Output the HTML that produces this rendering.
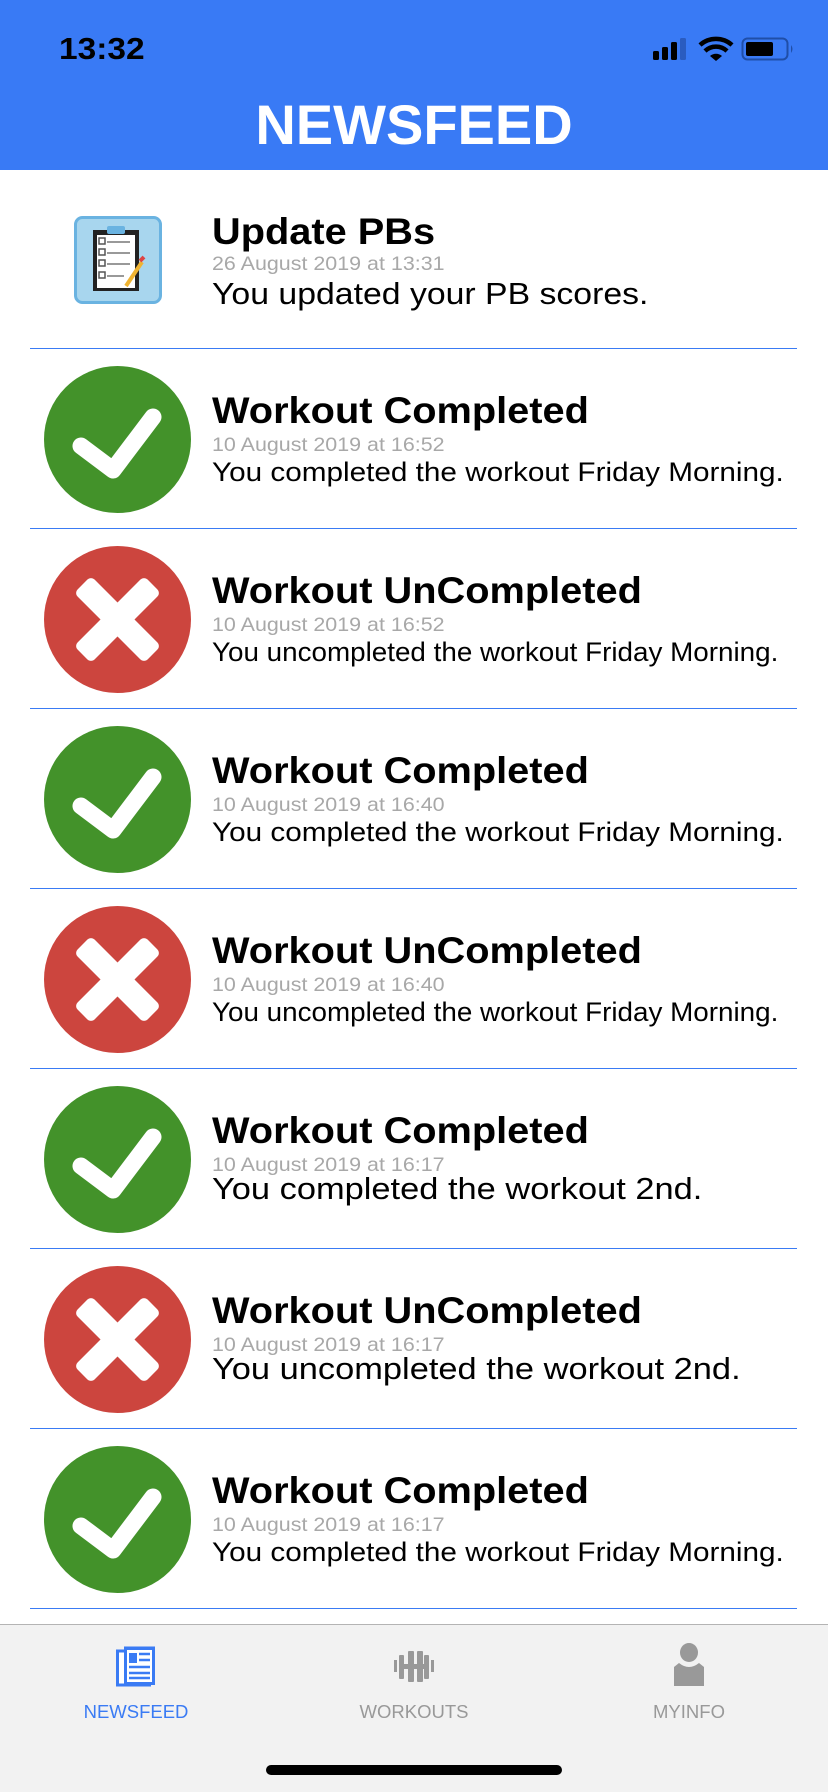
<!DOCTYPE html>
<html><head><meta charset="utf-8"><style>
*{margin:0;padding:0;box-sizing:border-box}
html,body{width:828px;height:1792px;overflow:hidden}
body{position:relative;background:#fff;font-family:"Liberation Sans",sans-serif}
.hdr{position:absolute;left:0;top:0;width:828px;height:170px;background:#397af5}
.time{position:absolute;left:59px;top:33px;font-size:31px;font-weight:bold;color:#000;line-height:1;transform:scaleX(1.08);transform-origin:left}
.title{position:absolute;left:0;width:828px;top:97px;text-align:center;font-size:56px;font-weight:bold;color:#fff;line-height:1}
.row{position:absolute;left:0;width:828px;height:180px}
.line{position:absolute;left:30px;width:767px;height:1px;background:#3a7bf4}
.t{position:absolute;left:212px;font-size:37.5px;font-weight:bold;line-height:1;color:#000;white-space:nowrap;transform:scaleX(1.06);transform-origin:left}
.d{position:absolute;left:212px;font-size:19.5px;line-height:1;color:#a8a8a8;white-space:nowrap;transform:scaleX(1.1);transform-origin:left}
.s{position:absolute;left:212px;line-height:1;color:#000;white-space:nowrap;transform-origin:left}
.ic{position:absolute;left:44px;width:147px;height:147px}
.tab{position:absolute;left:0;top:1624px;width:828px;height:168px;background:#f2f2f2;border-top:1px solid #b4b4b4;overflow:hidden}
.tl{position:absolute;top:78px;font-size:18.5px;line-height:1;width:200px;text-align:center}
</style></head><body>
<div class="hdr">
<div class="time">13:32</div>
<svg style="position:absolute;left:650px;top:34px" width="150" height="30" viewBox="650 34 150 30">
<rect x="653" y="51" width="6" height="9" rx="1.5" fill="#000"/>
<rect x="662" y="47" width="6" height="13" rx="1.5" fill="#000"/>
<rect x="671" y="42" width="6" height="18" rx="1.5" fill="#000"/>
<rect x="680" y="38" width="6" height="22" rx="1.5" fill="#2a5cc0"/>
<path d="M700 45 A24 24 0 0 1 732 45" stroke="#000" stroke-width="4.5" fill="none"/>
<path d="M705 51 A16 16 0 0 1 727 51" stroke="#000" stroke-width="4.5" fill="none"/>
<path d="M710 56 L716 61 L722 56 A9 9 0 0 0 710 56Z" fill="#000"/>
<rect x="742.5" y="38.5" width="45" height="21" rx="5" fill="none" stroke="#1f4ea8" stroke-width="2"/>
<rect x="746" y="42" width="27" height="14" rx="2" fill="#000"/>
<path d="M791 45 Q794 49 791 53Z" fill="#1f4ea8"/>
</svg>
<div class="title">NEWSFEED</div>
</div>

<svg style="position:absolute;left:74px;top:216px" width="88" height="88" viewBox="0 0 88 88">
<rect x="1.5" y="1.5" width="85" height="85" rx="7" fill="#a8d6ee" stroke="#6ab3e1" stroke-width="3"/>
<rect x="19" y="14" width="46" height="61" fill="#222"/>
<rect x="23" y="19" width="38" height="53" fill="#fff"/>
<rect x="33" y="10" width="18" height="8" rx="2" fill="#6ab3e1"/>
<g stroke="#999" stroke-width="2"><line x1="33" y1="26" x2="56" y2="26"/><line x1="33" y1="37" x2="56" y2="37"/><line x1="33" y1="48" x2="56" y2="48"/><line x1="33" y1="60" x2="50" y2="60"/></g>
<g fill="none" stroke-width="1.5"><rect x="25" y="22" width="6" height="6" stroke="#555"/><rect x="25" y="33" width="6" height="6" stroke="#555"/><rect x="25" y="44" width="6" height="6" stroke="#555"/><rect x="25" y="56" width="6" height="6" stroke="#555"/></g>
<path d="M52 70 L68 46" stroke="#f0b432" stroke-width="4"/>
<path d="M66 45 L70 41" stroke="#d44" stroke-width="4"/>
</svg>
<div class="t" style="top:213px">Update PBs</div>
<div class="d" style="top:255px">26 August 2019 at 13:31</div>
<div class="s" style="top:278px;font-size:31px;transform:scaleX(1.09)">You updated your PB scores.</div>
<div class="line" style="top:348px"></div>

<div class="row" style="top:349px">
<svg class="ic" style="top:17px" viewBox="0 0 147 147"><circle cx="73.5" cy="73.5" r="73.5" fill="#43922a"/><path d="M37 80 L69 104 L109 51" stroke="#fff" stroke-width="17" stroke-linecap="round" stroke-linejoin="round" fill="none"/></svg>
<div class="t" style="top:43px">Workout Completed</div>
<div class="d" style="top:87px">10 August 2019 at 16:52</div>
<div class="s" style="top:110px;font-size:27px;transform:scaleX(1.1)">You completed the workout Friday Morning.</div>
<div class="line" style="top:179px"></div></div>

<div class="row" style="top:529px">
<svg class="ic" style="top:17px" viewBox="0 0 147 147"><circle cx="73.5" cy="73.5" r="73.5" fill="#cc453e"/><g transform="rotate(45 73.5 73.5)" fill="#fff"><rect x="24" y="61.5" width="99" height="24" rx="5"/><rect x="61.5" y="24" width="24" height="99" rx="5"/></g></svg>
<div class="t" style="top:43px">Workout UnCompleted</div>
<div class="d" style="top:87px">10 August 2019 at 16:52</div>
<div class="s" style="top:110px;font-size:27px;transform:scaleX(1.03)">You uncompleted the workout Friday Morning.</div>
<div class="line" style="top:179px"></div></div>

<div class="row" style="top:709px">
<svg class="ic" style="top:17px" viewBox="0 0 147 147"><circle cx="73.5" cy="73.5" r="73.5" fill="#43922a"/><path d="M37 80 L69 104 L109 51" stroke="#fff" stroke-width="17" stroke-linecap="round" stroke-linejoin="round" fill="none"/></svg>
<div class="t" style="top:43px">Workout Completed</div>
<div class="d" style="top:87px">10 August 2019 at 16:40</div>
<div class="s" style="top:110px;font-size:27px;transform:scaleX(1.1)">You completed the workout Friday Morning.</div>
<div class="line" style="top:179px"></div></div>

<div class="row" style="top:889px">
<svg class="ic" style="top:17px" viewBox="0 0 147 147"><circle cx="73.5" cy="73.5" r="73.5" fill="#cc453e"/><g transform="rotate(45 73.5 73.5)" fill="#fff"><rect x="24" y="61.5" width="99" height="24" rx="5"/><rect x="61.5" y="24" width="24" height="99" rx="5"/></g></svg>
<div class="t" style="top:43px">Workout UnCompleted</div>
<div class="d" style="top:87px">10 August 2019 at 16:40</div>
<div class="s" style="top:110px;font-size:27px;transform:scaleX(1.03)">You uncompleted the workout Friday Morning.</div>
<div class="line" style="top:179px"></div></div>

<div class="row" style="top:1069px">
<svg class="ic" style="top:17px" viewBox="0 0 147 147"><circle cx="73.5" cy="73.5" r="73.5" fill="#43922a"/><path d="M37 80 L69 104 L109 51" stroke="#fff" stroke-width="17" stroke-linecap="round" stroke-linejoin="round" fill="none"/></svg>
<div class="t" style="top:43px">Workout Completed</div>
<div class="d" style="top:87px">10 August 2019 at 16:17</div>
<div class="s" style="top:104px;font-size:31px;transform:scaleX(1.11)">You completed the workout 2nd.</div>
<div class="line" style="top:179px"></div></div>

<div class="row" style="top:1249px">
<svg class="ic" style="top:17px" viewBox="0 0 147 147"><circle cx="73.5" cy="73.5" r="73.5" fill="#cc453e"/><g transform="rotate(45 73.5 73.5)" fill="#fff"><rect x="24" y="61.5" width="99" height="24" rx="5"/><rect x="61.5" y="24" width="24" height="99" rx="5"/></g></svg>
<div class="t" style="top:43px">Workout UnCompleted</div>
<div class="d" style="top:87px">10 August 2019 at 16:17</div>
<div class="s" style="top:104px;font-size:31px;transform:scaleX(1.11)">You uncompleted the workout 2nd.</div>
<div class="line" style="top:179px"></div></div>

<div class="row" style="top:1429px">
<svg class="ic" style="top:17px" viewBox="0 0 147 147"><circle cx="73.5" cy="73.5" r="73.5" fill="#43922a"/><path d="M37 80 L69 104 L109 51" stroke="#fff" stroke-width="17" stroke-linecap="round" stroke-linejoin="round" fill="none"/></svg>
<div class="t" style="top:43px">Workout Completed</div>
<div class="d" style="top:87px">10 August 2019 at 16:17</div>
<div class="s" style="top:110px;font-size:27px;transform:scaleX(1.1)">You completed the workout Friday Morning.</div>
<div class="line" style="top:179px"></div></div>

<div class="tab">
<svg style="position:absolute;left:116px;top:20px" width="42" height="42" viewBox="0 0 42 42">
<rect x="1.5" y="6" width="32" height="34" fill="#fff" stroke="#3a7bf4" stroke-width="3"/>
<rect x="8" y="1.5" width="31" height="38.5" fill="#3a7bf4"/>
<rect x="11" y="5" width="25" height="32" fill="#fff"/>
<rect x="13" y="8" width="8" height="10" fill="#3a7bf4"/>
<g stroke="#3a7bf4" stroke-width="2.5"><line x1="23" y1="9" x2="34" y2="9"/><line x1="23" y1="15" x2="34" y2="15"/><line x1="13" y1="22" x2="34" y2="22"/><line x1="13" y1="28" x2="34" y2="28"/><line x1="13" y1="33" x2="34" y2="33"/></g>
</svg>
<svg style="position:absolute;left:393px;top:26px" width="42" height="32" viewBox="0 0 42 32">
<g fill="#999"><rect x="1" y="9" width="3" height="12"/><rect x="6" y="4" width="5" height="24" rx="1"/><rect x="11" y="13" width="20" height="5"/><rect x="15" y="0" width="6" height="31" rx="1"/><rect x="24" y="0" width="6" height="31" rx="1"/><rect x="31" y="4" width="5" height="24" rx="1"/><rect x="38" y="9" width="3" height="12"/></g>
</svg>
<svg style="position:absolute;left:673px;top:18px" width="32" height="44" viewBox="0 0 32 44">
<ellipse cx="16" cy="9.5" rx="9" ry="9.5" fill="#999"/>
<path d="M6 20 Q16 28 26 20 L31 24 L31 43 L1 43 L1 24Z" fill="#999"/>
</svg>
<div class="tl" style="left:36px;color:#3a7bf4">NEWSFEED</div>
<div class="tl" style="left:314px;color:#999">WORKOUTS</div>
<div class="tl" style="left:589px;color:#999">MYINFO</div>
<div style="position:absolute;left:266px;top:140px;width:296px;height:10px;border-radius:5px;background:#000"></div>
</div>
</body></html>
